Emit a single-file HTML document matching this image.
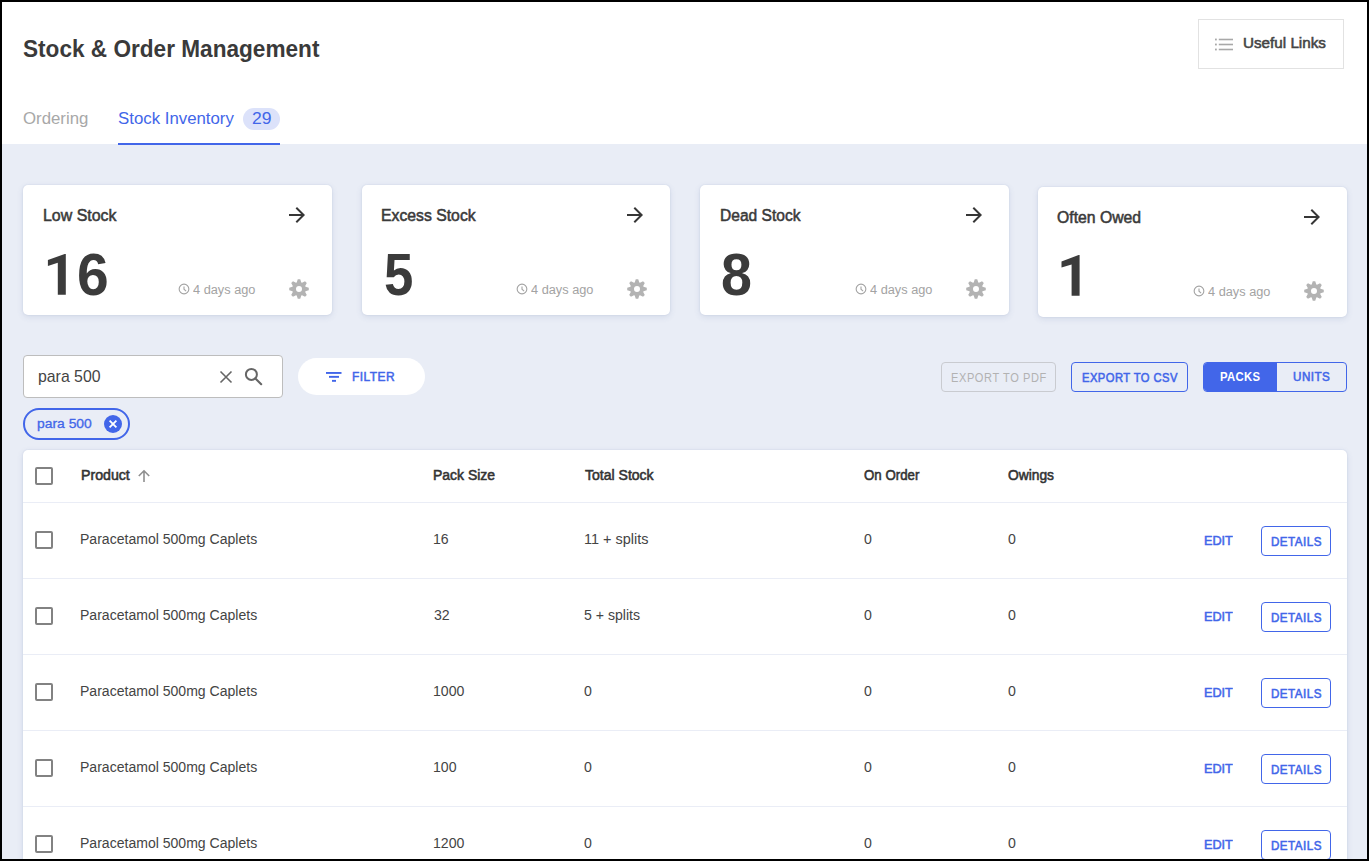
<!DOCTYPE html>
<html><head><meta charset="utf-8">
<style>
*{box-sizing:border-box;margin:0;padding:0}
html,body{width:1369px;height:861px;overflow:hidden}
body{font-family:"Liberation Sans",sans-serif;position:relative;background:#e9edf6;color:#333}
.a{position:absolute}
svg{display:block}
.t{position:absolute;white-space:nowrap;line-height:1;transform-origin:0 0}
.card{position:absolute;width:309px;height:130px;background:#fff;border-radius:5px;box-shadow:0 2px 6px rgba(70,90,150,.13),0 0 2px rgba(70,90,150,.14)}
.cb{position:absolute;width:18px;height:18px;border:2px solid #828282;border-radius:2px}
.det{position:absolute;width:70px;height:30px;border:1px solid #4266e9;border-radius:4px;background:#fff}
.sep{position:absolute;left:23px;width:1324px;height:1px;background:#eaedf6}
</style></head><body>
<div class="a" style="left:0;top:0;width:1369px;height:144px;background:#fff"></div>
<div class="a" style="left:1198px;top:19px;width:146px;height:50px;border:1px solid #e2e2e2;background:#fff"></div>
<svg class="a" style="left:1215px;top:38px" width="18" height="13" viewBox="0 0 18 13"><g fill="#a8a8a8"><rect x="0" y="0.6" width="1.8" height="1.8"/><rect x="0" y="5.6" width="1.8" height="1.8"/><rect x="0" y="10.6" width="1.8" height="1.8"/><rect x="3.8" y="0.7" width="14.2" height="1.6"/><rect x="3.8" y="5.7" width="14.2" height="1.6"/><rect x="3.8" y="10.7" width="14.2" height="1.6"/></g></svg>
<div class="a" style="left:243px;top:108px;width:37px;height:22px;border-radius:11px;background:#dce2fa"></div>
<div class="a" style="left:118px;top:143px;width:162px;height:2px;background:#4266e9"></div>

<div class="card" style="left:23px;top:185px"></div>
<div class="a" style="left:285px;top:202.5px"><svg width="24" height="24" viewBox="0 0 24 24"><path fill="#363636" d="M12 4l-1.41 1.41L16.17 11H4v2h12.17l-5.58 5.59L12 20l8-8z"/></svg></div>
<div class="a" style="left:286.95px;top:276.84px"><svg width="24" height="24" viewBox="0 0 24 24"><path fill="#b3b3b3" fill-rule="evenodd" d="M9.73 5.48 L10.76 2.23 L13.24 2.23 L14.27 5.48 L15.01 5.79 L18.03 4.21 L19.79 5.97 L18.21 8.99 L18.52 9.73 L21.77 10.76 L21.77 13.24 L18.52 14.27 L18.21 15.01 L19.79 18.03 L18.03 19.79 L15.01 18.21 L14.27 18.52 L13.24 21.77 L10.76 21.77 L9.73 18.52 L8.99 18.21 L5.97 19.79 L4.21 18.03 L5.79 15.01 L5.48 14.27 L2.23 13.24 L2.23 10.76 L5.48 9.73 L5.79 8.99 L4.21 5.97 L5.97 4.21 L8.99 5.79Z M15 12 A3 3 0 1 0 9 12 A3 3 0 1 0 15 12Z"/></svg></div>
<div class="a" style="left:178.45px;top:283.45px"><svg width="12" height="12" viewBox="0 0 12 12"><circle cx="6" cy="6" r="4.85" fill="none" stroke="#a3a3a3" stroke-width="1.1"/><path d="M6 3.5V6.2L8.1 8.1" fill="none" stroke="#a3a3a3" stroke-width="1.1"/></svg></div>
<div class="card" style="left:362px;top:185px;width:308px"></div>
<div class="a" style="left:623px;top:202.5px"><svg width="24" height="24" viewBox="0 0 24 24"><path fill="#363636" d="M12 4l-1.41 1.41L16.17 11H4v2h12.17l-5.58 5.59L12 20l8-8z"/></svg></div>
<div class="a" style="left:624.95px;top:276.84px"><svg width="24" height="24" viewBox="0 0 24 24"><path fill="#b3b3b3" fill-rule="evenodd" d="M9.73 5.48 L10.76 2.23 L13.24 2.23 L14.27 5.48 L15.01 5.79 L18.03 4.21 L19.79 5.97 L18.21 8.99 L18.52 9.73 L21.77 10.76 L21.77 13.24 L18.52 14.27 L18.21 15.01 L19.79 18.03 L18.03 19.79 L15.01 18.21 L14.27 18.52 L13.24 21.77 L10.76 21.77 L9.73 18.52 L8.99 18.21 L5.97 19.79 L4.21 18.03 L5.79 15.01 L5.48 14.27 L2.23 13.24 L2.23 10.76 L5.48 9.73 L5.79 8.99 L4.21 5.97 L5.97 4.21 L8.99 5.79Z M15 12 A3 3 0 1 0 9 12 A3 3 0 1 0 15 12Z"/></svg></div>
<div class="a" style="left:516.45px;top:283.45px"><svg width="12" height="12" viewBox="0 0 12 12"><circle cx="6" cy="6" r="4.85" fill="none" stroke="#a3a3a3" stroke-width="1.1"/><path d="M6 3.5V6.2L8.1 8.1" fill="none" stroke="#a3a3a3" stroke-width="1.1"/></svg></div>
<div class="card" style="left:700px;top:185px"></div>
<div class="a" style="left:962px;top:202.5px"><svg width="24" height="24" viewBox="0 0 24 24"><path fill="#363636" d="M12 4l-1.41 1.41L16.17 11H4v2h12.17l-5.58 5.59L12 20l8-8z"/></svg></div>
<div class="a" style="left:963.95px;top:276.84px"><svg width="24" height="24" viewBox="0 0 24 24"><path fill="#b3b3b3" fill-rule="evenodd" d="M9.73 5.48 L10.76 2.23 L13.24 2.23 L14.27 5.48 L15.01 5.79 L18.03 4.21 L19.79 5.97 L18.21 8.99 L18.52 9.73 L21.77 10.76 L21.77 13.24 L18.52 14.27 L18.21 15.01 L19.79 18.03 L18.03 19.79 L15.01 18.21 L14.27 18.52 L13.24 21.77 L10.76 21.77 L9.73 18.52 L8.99 18.21 L5.97 19.79 L4.21 18.03 L5.79 15.01 L5.48 14.27 L2.23 13.24 L2.23 10.76 L5.48 9.73 L5.79 8.99 L4.21 5.97 L5.97 4.21 L8.99 5.79Z M15 12 A3 3 0 1 0 9 12 A3 3 0 1 0 15 12Z"/></svg></div>
<div class="a" style="left:855.45px;top:283.45px"><svg width="12" height="12" viewBox="0 0 12 12"><circle cx="6" cy="6" r="4.85" fill="none" stroke="#a3a3a3" stroke-width="1.1"/><path d="M6 3.5V6.2L8.1 8.1" fill="none" stroke="#a3a3a3" stroke-width="1.1"/></svg></div>
<div class="card" style="left:1038px;top:187px"></div>
<div class="a" style="left:1300px;top:204.5px"><svg width="24" height="24" viewBox="0 0 24 24"><path fill="#363636" d="M12 4l-1.41 1.41L16.17 11H4v2h12.17l-5.58 5.59L12 20l8-8z"/></svg></div>
<div class="a" style="left:1301.95px;top:278.84px"><svg width="24" height="24" viewBox="0 0 24 24"><path fill="#b3b3b3" fill-rule="evenodd" d="M9.73 5.48 L10.76 2.23 L13.24 2.23 L14.27 5.48 L15.01 5.79 L18.03 4.21 L19.79 5.97 L18.21 8.99 L18.52 9.73 L21.77 10.76 L21.77 13.24 L18.52 14.27 L18.21 15.01 L19.79 18.03 L18.03 19.79 L15.01 18.21 L14.27 18.52 L13.24 21.77 L10.76 21.77 L9.73 18.52 L8.99 18.21 L5.97 19.79 L4.21 18.03 L5.79 15.01 L5.48 14.27 L2.23 13.24 L2.23 10.76 L5.48 9.73 L5.79 8.99 L4.21 5.97 L5.97 4.21 L8.99 5.79Z M15 12 A3 3 0 1 0 9 12 A3 3 0 1 0 15 12Z"/></svg></div>
<div class="a" style="left:1193.45px;top:285.45px"><svg width="12" height="12" viewBox="0 0 12 12"><circle cx="6" cy="6" r="4.85" fill="none" stroke="#a3a3a3" stroke-width="1.1"/><path d="M6 3.5V6.2L8.1 8.1" fill="none" stroke="#a3a3a3" stroke-width="1.1"/></svg></div>
<div class="a" style="left:23px;top:355px;width:260px;height:43px;border:1px solid #bdbdbd;border-radius:4px;background:#fff"></div>
<svg class="a" style="left:219px;top:370px" width="14" height="14" viewBox="0 0 14 14"><path d="M1.5 1.5L12.5 12.5M12.5 1.5L1.5 12.5" stroke="#666" stroke-width="1.6"/></svg>
<svg class="a" style="left:243px;top:366px" width="21" height="21" viewBox="0 0 21 21"><circle cx="8.4" cy="8.4" r="5.5" fill="none" stroke="#666" stroke-width="2"/><path d="M12.4 12.4L18.2 18.2" stroke="#666" stroke-width="2.1" stroke-linecap="round"/></svg>
<div class="a" style="left:298px;top:358px;width:127px;height:37px;border-radius:19px;background:#fff"></div>
<svg class="a" style="left:326px;top:372px" width="16" height="10" viewBox="0 0 16 10"><g fill="#4266e9"><rect x="0" y="0" width="15.5" height="1.9"/><rect x="3" y="3.9" width="10" height="1.9"/><rect x="6" y="7.9" width="4" height="1.9"/></g></svg>
<div class="a" style="left:23px;top:408px;width:107px;height:32px;border:2px solid #4266e9;border-radius:16px"></div>
<svg class="a" style="left:104px;top:415px" width="18" height="18" viewBox="0 0 18 18"><circle cx="9" cy="9" r="9" fill="#4266e9"/><path d="M5.6 5.6L12.4 12.4M12.4 5.6L5.6 12.4" stroke="#fff" stroke-width="1.8"/></svg>
<div class="a" style="left:941px;top:362px;width:115px;height:30px;border:1px solid #c9cbd0;border-radius:4px"></div>
<div class="a" style="left:1071px;top:362px;width:117px;height:30px;border:1px solid #4266e9;border-radius:4px"></div>
<div class="a" style="left:1203px;top:362px;width:144px;height:30px;border:1px solid #4266e9;border-radius:4px;overflow:hidden"><div class="a" style="left:0;top:0;width:73px;height:28px;background:#4266e9"></div></div>

<div class="a" style="left:23px;top:450px;width:1324px;height:430px;background:#fff;border-radius:5px;box-shadow:0 2px 6px rgba(70,90,150,.13),0 0 2px rgba(70,90,150,.14)"></div>
<div class="cb" style="left:35px;top:467px"></div>
<svg class="a" style="left:137px;top:469px" width="14" height="14" viewBox="0 0 14 14"><path d="M7 13V2.5M1.8 7L7 1.8L12.2 7" fill="none" stroke="#8f8f8f" stroke-width="1.6"/></svg>
<div class="sep" style="top:502px"></div>
<div class="cb" style="left:35px;top:531px"></div>
<div class="det" style="left:1261px;top:526px"></div>
<div class="sep" style="top:578px"></div>
<div class="cb" style="left:35px;top:607px"></div>
<div class="det" style="left:1261px;top:602px"></div>
<div class="sep" style="top:654px"></div>
<div class="cb" style="left:35px;top:683px"></div>
<div class="det" style="left:1261px;top:678px"></div>
<div class="sep" style="top:730px"></div>
<div class="cb" style="left:35px;top:759px"></div>
<div class="det" style="left:1261px;top:754px"></div>
<div class="sep" style="top:806px"></div>
<div class="cb" style="left:35px;top:835px"></div>
<div class="det" style="left:1261px;top:830px"></div>
<div class="sep" style="top:882px"></div>
<div class="t" style="left:23.45px;top:36.9px;font-size:24.56px;font-weight:700;color:#3a3a3a;transform:scaleX(0.9208);">Stock &amp; Order Management</div>
<div class="t" style="left:22.71px;top:110.6px;font-size:16.57px;font-weight:400;color:#a8a8a8;transform:scaleX(1.015);">Ordering</div>
<div class="t" style="left:117.77px;top:109.5px;font-size:16.13px;font-weight:400;color:#4266e9;transform:scaleX(1.0437);">Stock Inventory</div>
<div class="t" style="left:251.68px;top:109.5px;font-size:16.28px;font-weight:400;color:#4266e9;transform:scaleX(1.0788);">29</div>
<div class="t" style="left:1242.82px;top:35.43px;font-size:15.04px;font-weight:400;color:#444;transform:scaleX(1.0129);-webkit-text-stroke:0.55px #444;">Useful Links</div>
<div class="t" style="left:42.93px;top:207.62px;font-size:16.64px;font-weight:400;color:#3a3a3a;transform:scaleX(0.9581);-webkit-text-stroke:0.55px #3a3a3a;">Low Stock</div>
<div class="t" style="left:77.22px;top:245.0px;font-size:59.74px;font-weight:700;color:#3b3b3b;transform:scaleX(0.9541);">6</div>
<div class="t" style="left:193.1px;top:284.0px;font-size:12.5px;font-weight:400;color:#a3a3a3;transform:scaleX(1.0206);">4 days ago</div>
<div class="t" style="left:381.44px;top:207.62px;font-size:16.64px;font-weight:400;color:#3a3a3a;transform:scaleX(0.9486);-webkit-text-stroke:0.55px #3a3a3a;">Excess Stock</div>
<div class="t" style="left:383.88px;top:245.0px;font-size:59.74px;font-weight:700;color:#3b3b3b;transform:scaleX(0.883);">5</div>
<div class="t" style="left:531.1px;top:284.0px;font-size:12.5px;font-weight:400;color:#a3a3a3;transform:scaleX(1.0206);">4 days ago</div>
<div class="t" style="left:720.06px;top:207.62px;font-size:16.64px;font-weight:400;color:#3a3a3a;transform:scaleX(0.9361);-webkit-text-stroke:0.55px #3a3a3a;">Dead Stock</div>
<div class="t" style="left:721.16px;top:245.0px;font-size:59.74px;font-weight:700;color:#3b3b3b;transform:scaleX(0.9307);">8</div>
<div class="t" style="left:870.1px;top:284.0px;font-size:12.5px;font-weight:400;color:#a3a3a3;transform:scaleX(1.0206);">4 days ago</div>
<div class="t" style="left:1057.14px;top:209.62px;font-size:16.64px;font-weight:400;color:#3a3a3a;transform:scaleX(0.948);-webkit-text-stroke:0.55px #3a3a3a;">Often Owed</div>
<div class="t" style="left:1208.1px;top:286.0px;font-size:12.5px;font-weight:400;color:#a3a3a3;transform:scaleX(1.0206);">4 days ago</div>
<div class="t" style="left:37.71px;top:367.9px;font-size:17.15px;font-weight:400;color:#444;transform:scaleX(0.9244);">para 500</div>
<div class="t" style="left:352.14px;top:369.62px;font-size:13.59px;font-weight:400;color:#4266e9;transform:scaleX(0.884);-webkit-text-stroke:0.55px #4266e9;letter-spacing:0.5px;">FILTER</div>
<div class="t" style="left:36.98px;top:417.45px;font-size:13.08px;font-weight:400;color:#4266e9;transform:scaleX(1.0615);-webkit-text-stroke:0.3px #4266e9;">para 500</div>
<div class="t" style="left:950.74px;top:371.1px;font-size:13.23px;font-weight:400;color:#b2b2b2;transform:scaleX(0.836);letter-spacing:0.7px;">EXPORT TO PDF</div>
<div class="t" style="left:1081.5px;top:371.83px;font-size:12.43px;font-weight:400;color:#4266e9;transform:scaleX(0.9021);-webkit-text-stroke:0.55px #4266e9;letter-spacing:0.5px;">EXPORT TO CSV</div>
<div class="t" style="left:1219.99px;top:370.8px;font-size:12.39px;font-weight:700;color:#fff;transform:scaleX(0.9127);letter-spacing:0.4px;">PACKS</div>
<div class="t" style="left:1293.35px;top:370.53px;font-size:12.39px;font-weight:400;color:#4266e9;transform:scaleX(0.9412);-webkit-text-stroke:0.55px #4266e9;letter-spacing:0.5px;">UNITS</div>
<div class="t" style="left:80.97px;top:468.73px;font-size:13.88px;font-weight:400;color:#333;transform:scaleX(1.0204);-webkit-text-stroke:0.55px #333;">Product</div>
<div class="t" style="left:433.38px;top:468.73px;font-size:13.88px;font-weight:400;color:#333;transform:scaleX(1.0064);-webkit-text-stroke:0.55px #333;">Pack Size</div>
<div class="t" style="left:584.86px;top:468.73px;font-size:13.88px;font-weight:400;color:#333;transform:scaleX(1.0112);-webkit-text-stroke:0.55px #333;">Total Stock</div>
<div class="t" style="left:864.25px;top:468.73px;font-size:13.88px;font-weight:400;color:#333;transform:scaleX(0.9565);-webkit-text-stroke:0.55px #333;">On Order</div>
<div class="t" style="left:1008.13px;top:468.73px;font-size:13.88px;font-weight:400;color:#333;transform:scaleX(0.9945);-webkit-text-stroke:0.55px #333;">Owings</div>
<div class="t" style="left:80.4px;top:532.7px;font-size:13.95px;font-weight:400;color:#444;transform:scaleX(1.0075);">Paracetamol 500mg Caplets</div>
<div class="t" style="left:433.32px;top:532.7px;font-size:13.95px;font-weight:400;color:#444;transform:scaleX(1.0127);">16</div>
<div class="t" style="left:583.89px;top:532.7px;font-size:13.95px;font-weight:400;color:#444;transform:scaleX(1.0385);">11 + splits</div>
<div class="t" style="left:864.16px;top:532.7px;font-size:13.95px;font-weight:400;color:#444;transform:scaleX(1.0127);">0</div>
<div class="t" style="left:1008.06px;top:532.7px;font-size:13.95px;font-weight:400;color:#444;transform:scaleX(1.0127);">0</div>
<div class="t" style="left:1203.79px;top:533.93px;font-size:13.59px;font-weight:400;color:#4266e9;transform:scaleX(0.9322);-webkit-text-stroke:0.55px #4266e9;">EDIT</div>
<div class="t" style="left:1270.77px;top:535.62px;font-size:12.43px;font-weight:400;color:#4266e9;transform:scaleX(0.9362);-webkit-text-stroke:0.55px #4266e9;letter-spacing:0.5px;">DETAILS</div>
<div class="t" style="left:80.4px;top:608.7px;font-size:13.95px;font-weight:400;color:#444;transform:scaleX(1.0075);">Paracetamol 500mg Caplets</div>
<div class="t" style="left:433.76px;top:608.7px;font-size:13.95px;font-weight:400;color:#444;transform:scaleX(1.0127);">32</div>
<div class="t" style="left:584.36px;top:608.7px;font-size:13.95px;font-weight:400;color:#444;transform:scaleX(1.0127);">5 + splits</div>
<div class="t" style="left:864.16px;top:608.7px;font-size:13.95px;font-weight:400;color:#444;transform:scaleX(1.0127);">0</div>
<div class="t" style="left:1008.06px;top:608.7px;font-size:13.95px;font-weight:400;color:#444;transform:scaleX(1.0127);">0</div>
<div class="t" style="left:1203.79px;top:609.93px;font-size:13.59px;font-weight:400;color:#4266e9;transform:scaleX(0.9322);-webkit-text-stroke:0.55px #4266e9;">EDIT</div>
<div class="t" style="left:1270.77px;top:611.62px;font-size:12.43px;font-weight:400;color:#4266e9;transform:scaleX(0.9362);-webkit-text-stroke:0.55px #4266e9;letter-spacing:0.5px;">DETAILS</div>
<div class="t" style="left:80.4px;top:684.7px;font-size:13.95px;font-weight:400;color:#444;transform:scaleX(1.0075);">Paracetamol 500mg Caplets</div>
<div class="t" style="left:433.32px;top:684.7px;font-size:13.95px;font-weight:400;color:#444;transform:scaleX(1.0127);">1000</div>
<div class="t" style="left:584.36px;top:684.7px;font-size:13.95px;font-weight:400;color:#444;transform:scaleX(1.0127);">0</div>
<div class="t" style="left:864.16px;top:684.7px;font-size:13.95px;font-weight:400;color:#444;transform:scaleX(1.0127);">0</div>
<div class="t" style="left:1008.06px;top:684.7px;font-size:13.95px;font-weight:400;color:#444;transform:scaleX(1.0127);">0</div>
<div class="t" style="left:1203.79px;top:685.93px;font-size:13.59px;font-weight:400;color:#4266e9;transform:scaleX(0.9322);-webkit-text-stroke:0.55px #4266e9;">EDIT</div>
<div class="t" style="left:1270.77px;top:687.62px;font-size:12.43px;font-weight:400;color:#4266e9;transform:scaleX(0.9362);-webkit-text-stroke:0.55px #4266e9;letter-spacing:0.5px;">DETAILS</div>
<div class="t" style="left:80.4px;top:760.7px;font-size:13.95px;font-weight:400;color:#444;transform:scaleX(1.0075);">Paracetamol 500mg Caplets</div>
<div class="t" style="left:433.32px;top:760.7px;font-size:13.95px;font-weight:400;color:#444;transform:scaleX(1.0127);">100</div>
<div class="t" style="left:584.36px;top:760.7px;font-size:13.95px;font-weight:400;color:#444;transform:scaleX(1.0127);">0</div>
<div class="t" style="left:864.16px;top:760.7px;font-size:13.95px;font-weight:400;color:#444;transform:scaleX(1.0127);">0</div>
<div class="t" style="left:1008.06px;top:760.7px;font-size:13.95px;font-weight:400;color:#444;transform:scaleX(1.0127);">0</div>
<div class="t" style="left:1203.79px;top:761.93px;font-size:13.59px;font-weight:400;color:#4266e9;transform:scaleX(0.9322);-webkit-text-stroke:0.55px #4266e9;">EDIT</div>
<div class="t" style="left:1270.77px;top:763.62px;font-size:12.43px;font-weight:400;color:#4266e9;transform:scaleX(0.9362);-webkit-text-stroke:0.55px #4266e9;letter-spacing:0.5px;">DETAILS</div>
<div class="t" style="left:80.4px;top:836.7px;font-size:13.95px;font-weight:400;color:#444;transform:scaleX(1.0075);">Paracetamol 500mg Caplets</div>
<div class="t" style="left:433.32px;top:836.7px;font-size:13.95px;font-weight:400;color:#444;transform:scaleX(1.0127);">1200</div>
<div class="t" style="left:584.36px;top:836.7px;font-size:13.95px;font-weight:400;color:#444;transform:scaleX(1.0127);">0</div>
<div class="t" style="left:864.16px;top:836.7px;font-size:13.95px;font-weight:400;color:#444;transform:scaleX(1.0127);">0</div>
<div class="t" style="left:1008.06px;top:836.7px;font-size:13.95px;font-weight:400;color:#444;transform:scaleX(1.0127);">0</div>
<div class="t" style="left:1203.79px;top:837.93px;font-size:13.59px;font-weight:400;color:#4266e9;transform:scaleX(0.9322);-webkit-text-stroke:0.55px #4266e9;">EDIT</div>
<div class="t" style="left:1270.77px;top:839.62px;font-size:12.43px;font-weight:400;color:#4266e9;transform:scaleX(0.9362);-webkit-text-stroke:0.55px #4266e9;letter-spacing:0.5px;">DETAILS</div>
<svg class="a" style="left:0;top:0" width="1369" height="861"><polygon fill="#3b3b3b" points="47.9,260 64.7,254.06 65.8,254.06 65.8,294.8 57.8,294.8 57.8,262.8 47.9,265.9"/></svg>
<svg class="a" style="left:0;top:0" width="1369" height="861"><polygon fill="#3b3b3b" points="1061.5,261.4 1078.6,255.1 1079.6,255.1 1079.6,295.7 1071.6,295.7 1071.6,264.5 1061.5,267.6"/></svg>
<div class="a" style="left:0;top:0;width:1369px;height:861px;border:2px solid #000;z-index:10"></div>
</body></html>
